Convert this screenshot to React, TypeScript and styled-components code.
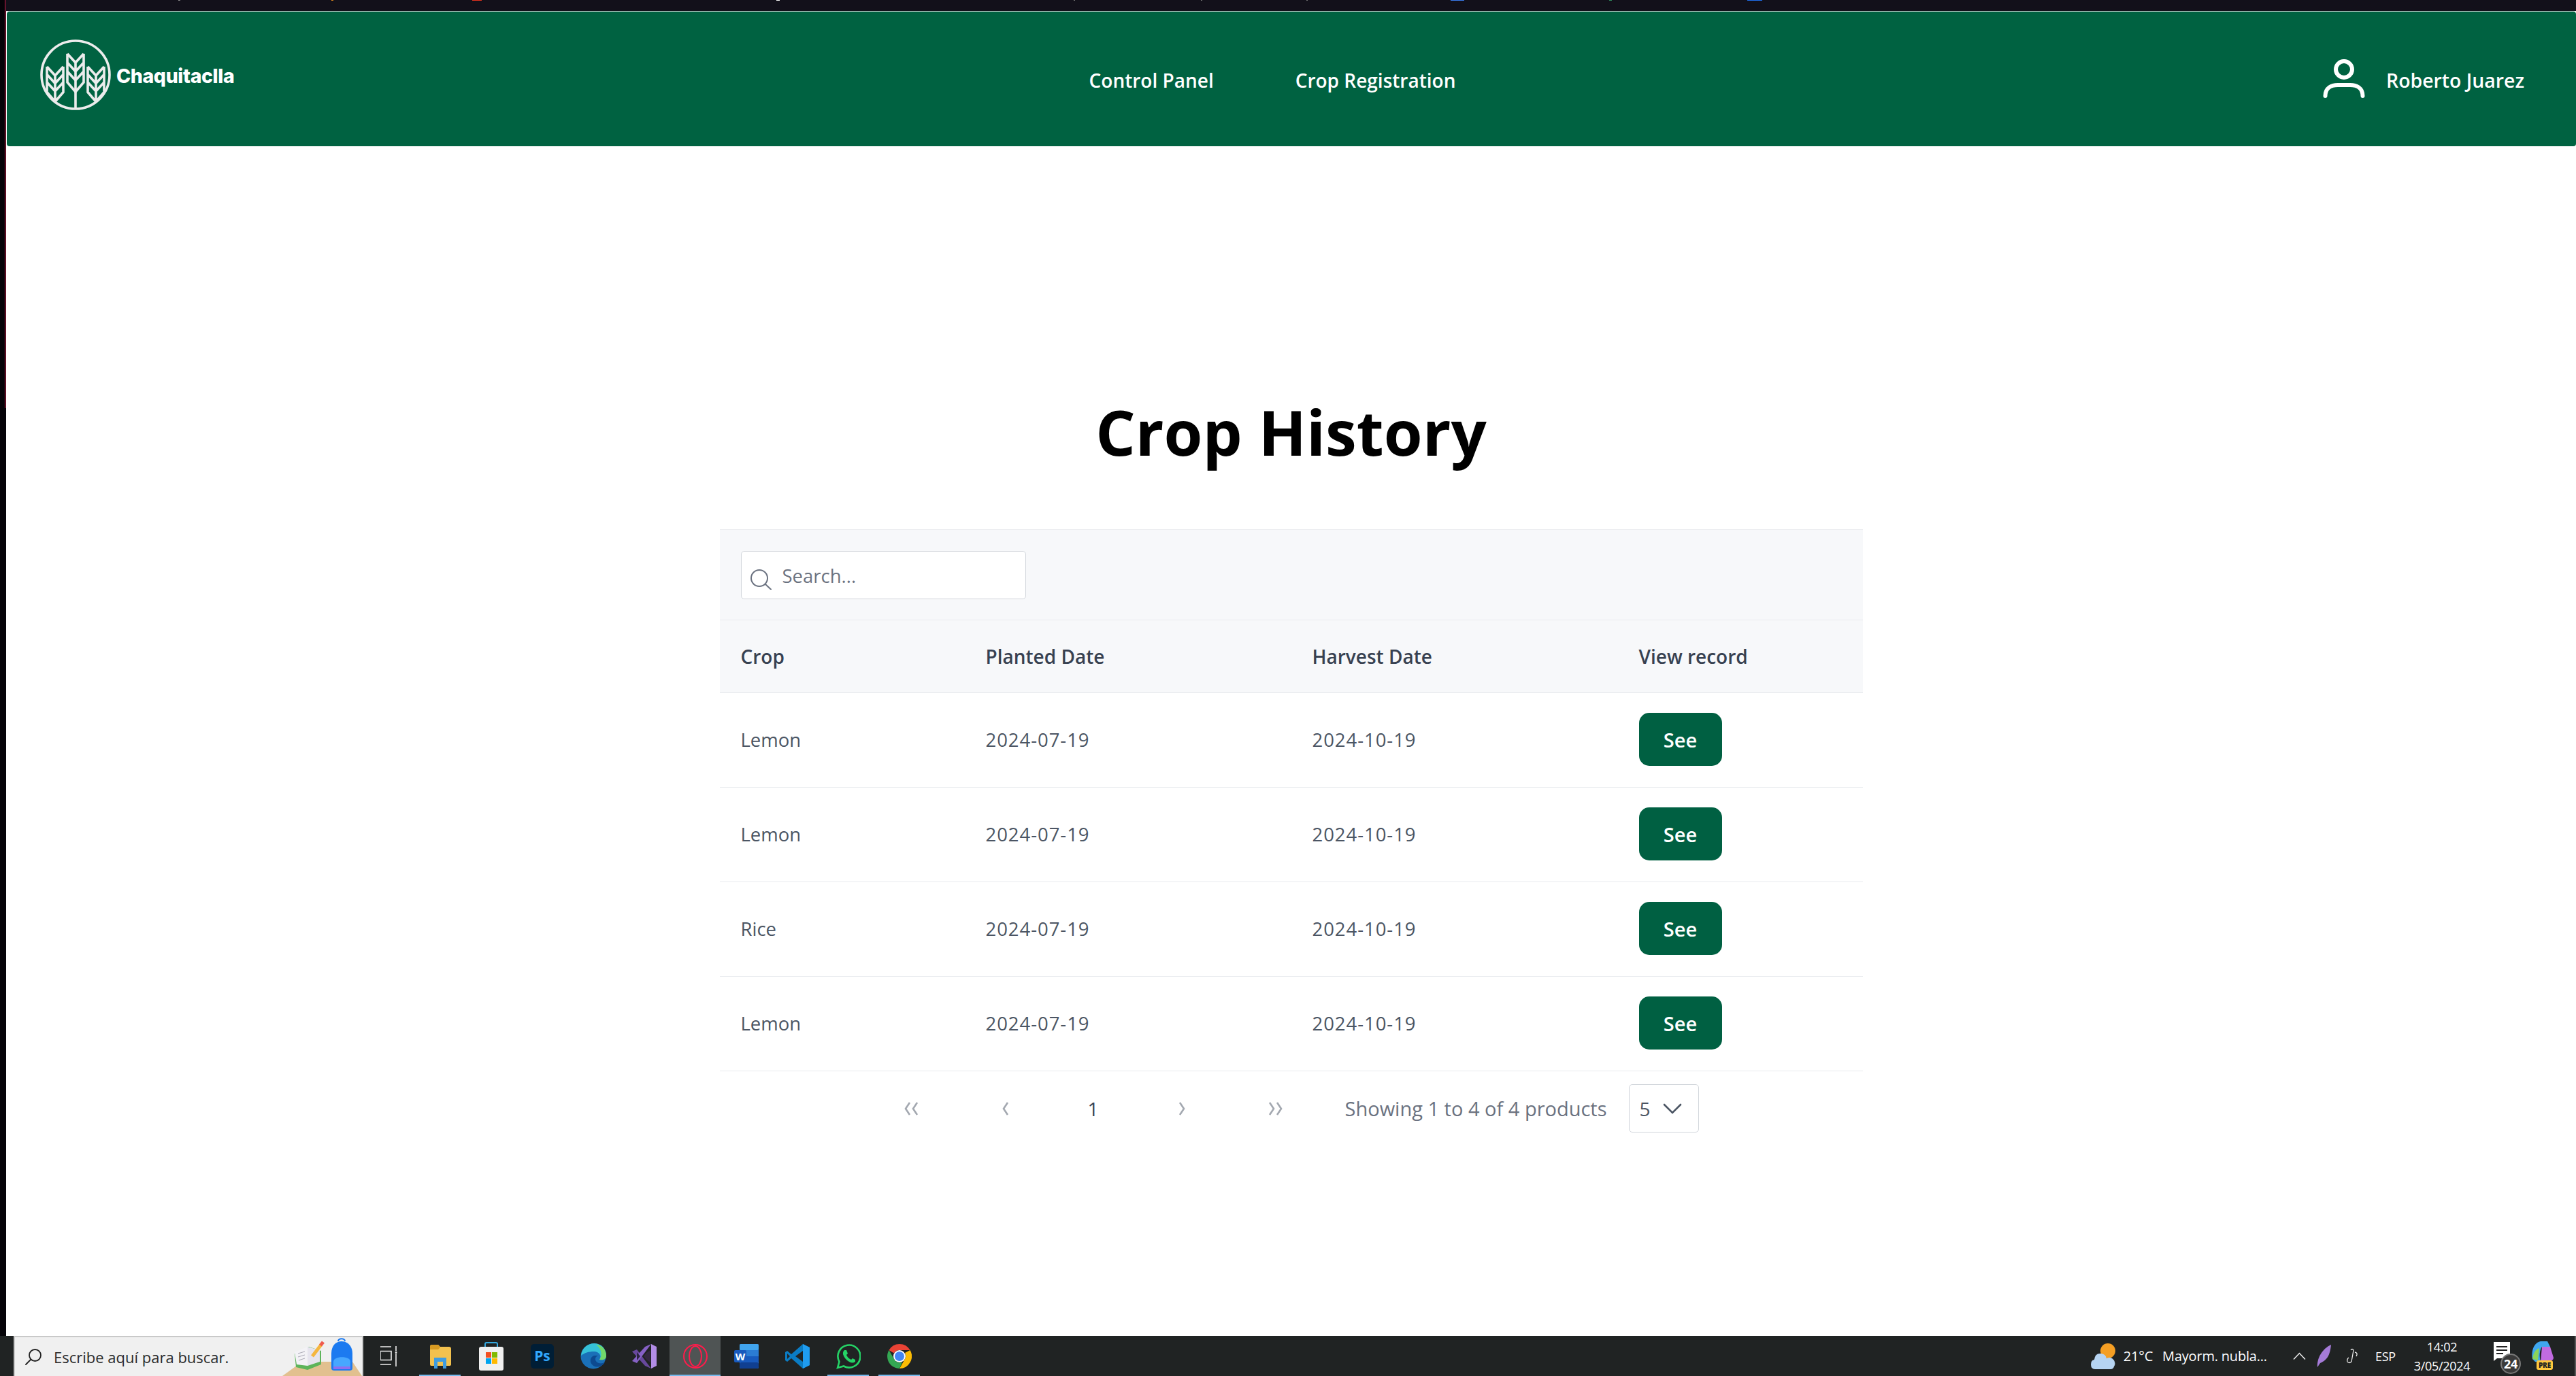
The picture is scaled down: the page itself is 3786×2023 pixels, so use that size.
import React from "react";
import styled, { createGlobalStyle } from "styled-components";

const Global = createGlobalStyle`
  html, body { margin: 0; padding: 0; background: #fff; }
  body { font-family: "Open Sans", "Noto Sans", sans-serif; }
  * { box-sizing: border-box; }
`;

const Screen = styled.div`
  width: 3786px;
  height: 2023px;
  display: flex;
  flex-direction: column;
  overflow: hidden;
`;
const TopStrip = styled.div`
  height: 16px;
  flex: none;
  background: #12101a;
  border-left: 8px solid #050308;
  position: relative;
`;
const Speck = styled.i<{ $x: number; $w: number; $c: string }>`
  position: absolute;
  top: 0;
  left: ${(p) => p.$x - 8}px;
  width: ${(p) => p.$w}px;
  height: 1px;
  background: ${(p) => p.$c};
`;
const Desktop = styled.div`
  flex: 1;
  display: flex;
  min-height: 0;
`;
const EdgeStripe = styled.div`
  width: 9px;
  flex: none;
  background: #050308;
  position: relative;
  &::after {
    content: "";
    position: absolute;
    left: 7px;
    top: -16px;
    height: 600px;
    width: 1px;
    background: #d81b4a;
  }
`;
const Page = styled.div`
  flex: 1;
  min-width: 0;
  background: #fff;
  border-top: 1px solid #e6e6e6;
  display: flex;
  flex-direction: column;
`;
const Navbar = styled.header`
  height: 198px;
  flex: none;
  background: #006241;
  border-radius: 4px;
  margin-left: 1px;
  display: grid;
  grid-template-columns: 1fr auto 1fr;
  align-items: center;
  padding: 0 76px 0 49px;
  color: #fff;
`;
const Brand = styled.div`
  display: flex;
  align-items: center;
  gap: 8px;
  margin-top: -12px;
`;
const BrandName = styled.span`
  font-family: "Inter", "Lato", sans-serif;
  font-weight: 800;
  font-size: 28.5px;
  letter-spacing: -0.4px;
  color: #fff;
  margin-top: 2px;
`;
const NavLinks = styled.nav`
  display: flex;
  gap: 120px;
  margin: 3px 0 0 -29px;
`;
const NavLink = styled.a`
  font-size: 28px;
  font-weight: 600;
  color: #fff;
  line-height: 38px;
`;
const UserBox = styled.div`
  justify-self: end;
  display: flex;
  align-items: center;
  gap: 31px;
`;
const UserName = styled.span`
  font-size: 28.4px;
  font-weight: 600;
  margin-top: 4px;
`;
const Main = styled.main`
  flex: 1;
  display: flex;
  flex-direction: column;
  align-items: center;
  padding-top: 360px;
`;
const Title = styled.h1`
  margin: 0 0 83px;
  font-size: 92px;
  line-height: 120px;
  font-weight: 700;
  color: #000;
`;
const TableCard = styled.section`
  width: 1680px;
`;
const SearchBar = styled.div`
  height: 134px;
  padding: 31px 31px 0;
  background: #f7f8fa;
  border-top: 1px solid #eceef1;
  border-bottom: 1px solid #e9ebee;
`;
const SearchField = styled.label`
  width: 419px;
  height: 71px;
  display: flex;
  align-items: center;
  gap: 16px;
  padding: 2px 0 0 12px;
  background: #fff;
  border: 1px solid #d1d5db;
  border-radius: 5px;
  font-size: 27.5px;
  color: #6b7280;
`;
const LensSvg = styled.svg`
  margin-top: 11px;
`;
const Grid = styled.table`
  width: 1680px;
  border-collapse: collapse;
  table-layout: fixed;
  font-size: 27.5px;
  color: #4b5563;
`;
const HeadRow = styled.tr`
  height: 106px;
  background: #f7f8fa;
  border-bottom: 1px solid #e5e7eb;
`;
const HeadCell = styled.th<{ $w: number }>`
  width: ${(p) => p.$w}px;
  padding: 0 0 0 31px;
  text-align: left;
  font-size: 28px;
  font-weight: 600;
  color: #374151;
`;
const BodyRow = styled.tr`
  height: 139px;
  border-bottom: 1px solid #e9ebee;
`;
const Cell = styled.td`
  padding: 0 0 0 31px;
`;
const DateCell = styled(Cell)`
  letter-spacing: 0.95px;
`;
const SeeButton = styled.button`
  display: block;
  width: 122px;
  height: 78px;
  border: 0;
  border-radius: 15px;
  background: #006042;
  color: #fff;
  font-family: inherit;
  font-size: 29px;
  font-weight: 600;
  padding: 0;
  margin-top: -1px;
`;
const Pager = styled.div`
  height: 110px;
  padding-left: 215px;
  display: flex;
  align-items: center;
  font-size: 29px;
  color: #6b7280;
`;
const PageButton = styled.span<{ $w: number; $active?: boolean }>`
  width: ${(p) => p.$w}px;
  height: 60px;
  flex: none;
  display: flex;
  align-items: center;
  justify-content: center;
  color: ${(p) => (p.$active ? "#374151" : "#9ca3af")};
  font-size: 28px;
`;
const PagerInfo = styled.span`
  margin-left: 35px;
  white-space: nowrap;
  width: 382px;
`;
const PageSize = styled.div`
  margin-left: 35px;
  width: 103px;
  height: 71px;
  border: 1px solid #d1d5db;
  border-radius: 5px;
  display: flex;
  align-items: center;
  padding-left: 15px;
  gap: 18px;
  font-size: 28px;
  color: #4b5563;
`;
const Taskbar = styled.footer`
  height: 59px;
  flex: none;
  background: #202323;
  display: flex;
  align-items: stretch;
  padding-left: 20px;
  color: #fff;
`;
const SearchTray = styled.div`
  width: 514px;
  background: #f0f0f0;
  border: solid #c9c9c9;
  border-width: 2px 2px 0 2px;
  display: flex;
  align-items: center;
  padding-left: 15px;
  gap: 18px;
  color: #2b2b2b;
  font-size: 22px;
  position: relative;
  overflow: hidden;
`;
const TrayLensSvg = styled.svg`
  transform: scaleX(-1);
`;
const TrayArt = styled.svg`
  position: absolute;
  right: 0;
  bottom: 0;
`;
const Tile = styled.div<{ $open?: boolean; $focus?: boolean }>`
  width: 75px;
  flex: none;
  display: flex;
  align-items: center;
  justify-content: center;
  background: ${(p) => (p.$focus ? "#4f5454" : "transparent")};
  position: relative;
  ${(p) =>
    p.$open &&
    `&::after { content: ""; position: absolute; bottom: 0; left: ${p.$focus ? 0 : 7}px; right: ${p.$focus ? 0 : 7}px; height: 2px; background: #76b9ed; }`}
`;
const Tray = styled.div`
  margin-left: auto;
  display: flex;
  align-items: center;
  font-size: 20px;
  letter-spacing: -0.2px;
  padding-right: 30px;
  border-right: 2px solid #5a5a5a;
`;
const Weather = styled.span`
  margin-left: 12px;
  white-space: nowrap;
`;
const WeatherDesc = styled.span`
  margin-left: 14px;
  white-space: nowrap;
`;
const TrayIcon = styled.span<{ $ml: number }>`
  margin-left: ${(p) => p.$ml}px;
  display: flex;
  align-items: center;
`;
const Lang = styled.span`
  margin-left: 24px;
  font-size: 18px;
`;
const Clock = styled.div`
  margin-left: 25px;
  width: 86px;
  display: flex;
  flex-direction: column;
  align-items: center;
  font-size: 18px;
  line-height: 28px;
  white-space: nowrap;
  letter-spacing: -0.3px;
`;
const NotifyBadge = styled.span`
  position: absolute;
  right: -2px;
  bottom: -5px;
  width: 30px;
  height: 30px;
  border-radius: 50%;
  background: #3a3a3a;
  border: 2px solid #777;
  display: flex;
  align-items: center;
  justify-content: center;
  font-size: 18px;
  font-weight: 700;
  color: #fff;
`;
const NotifyBox = styled.div`
  margin-left: 33px;
  width: 38px;
  height: 42px;
  position: relative;
`;

const Stalk = ({ cx, top, w, step }: { cx: number; top: number; w: number; step: number }) => {
  let d = "";
  for (let i = 0; i < 3; i++) {
    const y = top + step * i;
    d += `M${cx - w} ${y} L${cx} ${y + 13} L${cx + w} ${y} `;
  }
  const end = top + step * 3 + 3;
  return (
    <path
      d={`${d} M${cx - w} ${top} V${end} L${cx} ${end + 14} L${cx + w} ${end} V${top} M${cx} ${top + 13} V${end + 14}`}
    />
  );
};

const WheatLogo = () => (
  <svg width="104" height="104" viewBox="0 0 104 104" fill="none" stroke="#ececec" strokeWidth="3.6">
    <circle cx="52" cy="52" r="50" strokeWidth="3.6" />
    <Stalk cx={52} top={21} w={12} step={13} />
    <path d="M52 77 V102" />
    <Stalk cx={22} top={40} w={12} step={11.5} />
    <path d="M22 90 V92" />
    <Stalk cx={82} top={40} w={12} step={11.5} />
    <path d="M82 90 V92" />
  </svg>
);

const UserIcon = () => (
  <svg width="62" height="58" viewBox="0 0 62 58" fill="none" stroke="#fff" strokeWidth="6" strokeLinecap="round">
    <circle cx="31" cy="15" r="12" />
    <path d="M3.5 54 C3.5 42 13 38 22 38 H40 C49 38 58.5 42 58.5 54" />
  </svg>
);

const SearchIcon = () => (
  <LensSvg width="32" height="30" viewBox="0 0 32 30" fill="none" stroke="#6b7280" strokeWidth="2" strokeLinecap="round">
    <circle cx="14" cy="13" r="12" />
    <path d="M23 22 L31 29.5" />
  </LensSvg>
);

const TrayLens = () => (
  <TrayLensSvg width="24" height="24" viewBox="0 0 24 24" fill="none" stroke="#222" strokeWidth="1.8" strokeLinecap="round">
    <circle cx="9.5" cy="9.5" r="8.5" />
    <path d="M16 16 L23 23" />
  </TrayLensSvg>
);

const Chevrons = ({ dir, double }: { dir: "l" | "r"; double?: boolean }) => {
  const p =
    dir === "l"
      ? (x: number) => `M${x + 6} 1 L${x} 10 L${x + 6} 19`
      : (x: number) => `M${x} 1 L${x + 6} 10 L${x} 19`;
  return (
    <svg width={double ? 22 : 10} height="20" viewBox={double ? "0 0 22 20" : "0 0 10 20"} fill="none" stroke="#a3a8b0" strokeWidth="2.6">
      {double ? (
        <>
          <path d={p(2)} />
          <path d={p(13)} />
        </>
      ) : (
        <path d={p(2)} />
      )}
    </svg>
  );
};

const CaretDown = () => (
  <svg width="28" height="16" viewBox="0 0 28 16" fill="none" stroke="#4b5563" strokeWidth="2.6" strokeLinecap="round">
    <path d="M2 2 L14 14 L26 2" />
  </svg>
);

const TrayIllustration = () => (
  <TrayArt width="118" height="57" viewBox="0 0 118 57">
    <path d="M1 57 L30 36 H104 L118 57 Z" fill="#e2c08f" />
    <path d="M19 24 L40 14 L58 20 L58 40 L38 48 L21 44 Z" fill="#5db45a" />
    <path d="M19 22 L38 14 L38 42 L22 40 Z" fill="#f3f2f6" />
    <path d="M38 14 L56 19 L56 36 L38 42 Z" fill="#e6e4ee" />
    <path d="M24 24 L34 21 M24 29 L34 26 M25 34 L34 31" stroke="#a9a8b4" strokeWidth="1" />
    <path d="M45 28 L58 11" stroke="#f4b63f" strokeWidth="5" />
    <path d="M57 12 L61 7" stroke="#ef5b4e" strokeWidth="5" />
    <path d="M73 46 V24 C73 12 80 6 88 6 C96 6 104 12 104 24 V46 C104 48 102 49 100 49 H77 C75 49 73 48 73 46 Z" fill="#1c7af0" />
    <path d="M83 6 C83 1 93 1 93 6" stroke="#1c7af0" strokeWidth="2" fill="none" />
    <path d="M76 46 V36 C76 27 101 27 101 36 V46 Z" fill="#47a7ff" />
    <path d="M76 43 H101 V47 H76 Z" fill="#8f6ff0" />
  </TrayArt>
);

const TaskView = () => (
  <svg width="25" height="30" viewBox="0 0 25 30" fill="none" stroke="#eee" strokeWidth="1.6">
    <path d="M0 1 H16 M0 7.5 H16 V20.5 H0 Z M0 27 H16 M23 0 V7 M23 11 V30" />
    <rect x="21.8" y="8" width="2.6" height="2.6" fill="#eee" stroke="none" />
  </svg>
);
const Explorer = () => (
  <svg width="32" height="36" viewBox="0 0 32 36">
    <path d="M1 4 Q1 1 4 1 H13 L16 4 H29 Q32 4 32 7 V30 Q32 32 29 32 H3 Q1 32 1 30 Z" fill="#f2c14e" />
    <path d="M1 4 Q1 1 4 1 H13 L16 5 L13 8 H1 Z" fill="#d79a22" />
    <path d="M7 20 H25 V36 H20 V26 H12 V36 H7 Z" fill="#3e9ce0" />
  </svg>
);
const Store = () => (
  <svg width="36" height="42" viewBox="0 0 36 42">
    <path d="M9 8 V3 Q9 1 11 1 H25 Q27 1 27 3 V8" fill="none" stroke="#36a9e0" strokeWidth="2" />
    <rect x="0" y="7" width="36" height="35" rx="3" fill="#f0f0f0" />
    <rect x="10" y="15" width="8" height="8" fill="#f25022" />
    <rect x="19" y="15" width="8" height="8" fill="#7fba00" />
    <rect x="10" y="24" width="8" height="8" fill="#00a4ef" />
    <rect x="19" y="24" width="8" height="8" fill="#ffb900" />
  </svg>
);
const PS = () => (
  <svg width="34" height="36" viewBox="0 0 34 36">
    <rect width="34" height="36" rx="5" fill="#001e36" />
    <text x="17" y="25" textAnchor="middle" fontSize="21" fontWeight="700" fill="#31a8ff" fontFamily="Open Sans, sans-serif">Ps</text>
  </svg>
);
const Edge = () => (
  <svg width="38" height="38" viewBox="0 0 38 38">
    <circle cx="19" cy="19" r="18.5" fill="#1a70b8" />
    <path d="M1 18 C2 6 12 0 20 0 C31 0 38 8 38 18 C38 24 33 25 28 24 C32 19 28 12 20 12 C12 12 6 14 1 18 Z" fill="#35c1d8" />
    <path d="M23 2 C31 2 38 9 38 18 C38 24 33 25 28 24 C32 19 32 8 23 2 Z" fill="#72d86a" />
    <path d="M20 18 C14 20 13 28 18 32 C24 37 32 34 36 28 C30 31 22 29 22 23 C22 21 23 19 26 18 Z" fill="#0d4a90" />
  </svg>
);
const VS = () => (
  <svg width="36" height="36" viewBox="0 0 36 36">
    <path d="M0 11 L7 8 L28 36 L19 32 Z" fill="#68489c" />
    <path d="M0 25 L7 28 L28 0 L19 4 Z" fill="#8661c5" />
    <path d="M28 0 L36 4 V32 L28 36 Z" fill="#b28de6" />
    <path d="M7 12 L12 18 L7 24 Z" fill="#2c2440" />
    <path d="M21 13 L27 9 V27 L21 23 L17 18 Z" fill="#33283f" />
  </svg>
);
const Opera = () => (
  <svg width="36" height="36" viewBox="0 0 36 36" fill="none" stroke="#ff1b4b" strokeWidth="2">
    <circle cx="18" cy="18" r="17" />
    <ellipse cx="18" cy="18" rx="9" ry="15" />
  </svg>
);
const Word = () => (
  <svg width="36" height="36" viewBox="0 0 36 36">
    <rect x="8" y="0" width="28" height="36" rx="2" fill="#2b7cd3" />
    <rect x="8" y="0" width="28" height="9" rx="2" fill="#41a5ee" />
    <rect x="8" y="18" width="28" height="9" fill="#185abd" />
    <rect x="8" y="27" width="28" height="9" rx="2" fill="#103f91" />
    <rect x="0" y="9" width="18" height="18" rx="2" fill="#185abd" />
    <text x="9" y="24" textAnchor="middle" fontSize="15" fontWeight="700" fill="#fff" fontFamily="Open Sans, sans-serif">W</text>
  </svg>
);
const VSCode = () => (
  <svg width="36" height="36" viewBox="0 0 36 36">
    <path d="M26 0 L36 5 V31 L26 36 L9 21 L3 26 L0 24 V12 L3 10 L9 15 Z" fill="#0a7cc4" />
    <path d="M26 0 L36 5 V31 L26 36 Z" fill="#1f9cf0" />
    <path d="M26 10 L15 18 L26 26 Z" fill="#202323" />
    <path d="M3 14 L7 18 L3 22 Z" fill="#202323" />
  </svg>
);
const WhatsApp = () => (
  <svg width="36" height="38" viewBox="0 0 36 38" fill="none">
    <path d="M2 36 L4.5 27 A16.5 16.5 0 1 1 11 33.5 Z" stroke="#25d366" strokeWidth="2.6" />
    <path d="M12 10 L15 10 L17 15 L15 17 Q17 22 22 24 L24 22 L28 24 L28 27 Q24 30 19 27 Q12 23 10 16 Q9.5 12 12 10 Z" fill="#25d366" />
  </svg>
);
const Chrome = () => (
  <svg width="36" height="36" viewBox="0 0 36 36">
    <path d="M18 0 A18 18 0 0 1 33.6 9 H18 A9 9 0 0 0 10 13.5 L2.5 9 A18 18 0 0 1 18 0 Z" fill="#ea4335" />
    <path d="M33.6 9 A18 18 0 0 1 18 36 L26 22 A9 9 0 0 0 26 13 Z" fill="#fbbc04" />
    <path d="M18 36 A18 18 0 0 1 2.5 9 L10 22 A9 9 0 0 0 22 26.5 Z" fill="#34a853" />
    <circle cx="18" cy="18" r="9" fill="#fff" />
    <circle cx="18" cy="18" r="7" fill="#4285f4" />
  </svg>
);
const Cloud = () => (
  <svg width="36" height="42" viewBox="0 0 36 42">
    <circle cx="25" cy="13" r="11" fill="#f59f24" />
    <path d="M6 40 Q0 40 0 33 Q0 27 5 26 Q6 16 15 17 Q22 18 23 24 Q30 21 34 27 Q37 32 34 36 Q33 40 29 40 Z" fill="#b6d4f2" />
  </svg>
);
const Up = () => (
  <svg width="19" height="11" viewBox="0 0 19 11" fill="none" stroke="#eee" strokeWidth="1.5">
    <path d="M1 10.5 L9.5 1.5 L18 10.5" />
  </svg>
);
const Feather = () => (
  <svg width="21" height="34" viewBox="0 0 21 34">
    <path d="M1 33 C0 20 8 6 21 0 C20 10 18 22 5 27 Z" fill="#a57bd8" />
  </svg>
);
const Pen = () => (
  <svg width="20" height="24" viewBox="0 0 20 24" fill="none" stroke="#eee" strokeWidth="1.3">
    <path d="M8 3 Q10 0 12 3 L9 20 Q5 23 3 20 Q2 16 5 14 M14 6 Q19 7 16 12" />
  </svg>
);
const Copilot = () => (
  <svg width="34" height="44" viewBox="0 0 34 44">
    <path d="M2 26 C0 14 4 2 14 0 H24 L28 8 H16 C12 14 12 22 14 30 L6 30 Z" fill="#3fa7f0" />
    <path d="M16 8 H28 L33 24 C33 28 28 30 22 30 H14 Z" fill="#c16be0" />
    <path d="M2 26 C3 18 6 12 12 10 L10 28 Z" fill="#8bd35a" />
    <rect x="8" y="28" width="24" height="14" rx="3" fill="#ffc83d" />
    <text x="20" y="39" textAnchor="middle" fontSize="10" fontWeight="800" fill="#222" fontFamily="Open Sans, sans-serif">PRE</text>
  </svg>
);

const rows = ["Lemon", "Lemon", "Rice", "Lemon"];
const specks = [
  { x: 262, w: 3, c: "#8a8a8a" },
  { x: 487, w: 3, c: "#e08a1e" },
  { x: 694, w: 14, c: "#e8321e" },
  { x: 1141, w: 5, c: "#ffffff" },
  { x: 1578, w: 2, c: "#777777" },
  { x: 1765, w: 2, c: "#777777" },
  { x: 1920, w: 2, c: "#777777" },
  { x: 2132, w: 20, c: "#3b7cf0" },
  { x: 2365, w: 4, c: "#2f8f5f" },
  { x: 2568, w: 22, c: "#1f6ff0" },
];

export default function App() {
  return (
    <Screen>
      <Global />
      <TopStrip>
        {specks.map((s) => (
          <Speck key={s.x} $x={s.x} $w={s.w} $c={s.c} />
        ))}
      </TopStrip>
      <Desktop>
        <EdgeStripe />
        <Page>
          <Navbar>
            <Brand>
              <WheatLogo />
              <BrandName>Chaquitaclla</BrandName>
            </Brand>
            <NavLinks>
              <NavLink>Control Panel</NavLink>
              <NavLink>Crop Registration</NavLink>
            </NavLinks>
            <UserBox>
              <UserIcon />
              <UserName>Roberto Juarez</UserName>
            </UserBox>
          </Navbar>
          <Main>
            <Title>Crop History</Title>
            <TableCard>
              <SearchBar>
                <SearchField>
                  <SearchIcon />
                  Search...
                </SearchField>
              </SearchBar>
              <Grid>
                <thead>
                  <HeadRow>
                    <HeadCell $w={360}>Crop</HeadCell>
                    <HeadCell $w={480}>Planted Date</HeadCell>
                    <HeadCell $w={480}>Harvest Date</HeadCell>
                    <HeadCell $w={360}>View record</HeadCell>
                  </HeadRow>
                </thead>
                <tbody>
                  {rows.map((r, i) => (
                    <BodyRow key={i}>
                      <Cell>{r}</Cell>
                      <DateCell>2024-07-19</DateCell>
                      <DateCell>2024-10-19</DateCell>
                      <Cell>
                        <SeeButton>See</SeeButton>
                      </Cell>
                    </BodyRow>
                  ))}
                </tbody>
              </Grid>
              <Pager>
                <PageButton $w={134}><Chevrons dir="l" double /></PageButton>
                <PageButton $w={142}><Chevrons dir="l" /></PageButton>
                <PageButton $w={116} $active>1</PageButton>
                <PageButton $w={144}><Chevrons dir="r" /></PageButton>
                <PageButton $w={133}><Chevrons dir="r" double /></PageButton>
                <PagerInfo>Showing 1 to 4 of 4 products</PagerInfo>
                <PageSize>
                  5
                  <CaretDown />
                </PageSize>
              </Pager>
            </TableCard>
          </Main>
        </Page>
      </Desktop>
      <Taskbar>
        <SearchTray>
          <TrayLens />
          Escribe aquí para buscar.
          <TrayIllustration />
        </SearchTray>
        <Tile><TaskView /></Tile>
        <Tile $open><Explorer /></Tile>
        <Tile><Store /></Tile>
        <Tile><PS /></Tile>
        <Tile><Edge /></Tile>
        <Tile><VS /></Tile>
        <Tile $open $focus><Opera /></Tile>
        <Tile><Word /></Tile>
        <Tile><VSCode /></Tile>
        <Tile $open><WhatsApp /></Tile>
        <Tile $open><Chrome /></Tile>
        <Tray>
          <Cloud />
          <Weather>21°C</Weather>
          <WeatherDesc>Mayorm. nubla...</WeatherDesc>
          <TrayIcon $ml={38}><Up /></TrayIcon>
          <TrayIcon $ml={16}><Feather /></TrayIcon>
          <TrayIcon $ml={21}><Pen /></TrayIcon>
          <Lang>ESP</Lang>
          <Clock>
            <span>14:02</span>
            <span>3/05/2024</span>
          </Clock>
          <NotifyBox>
            <svg width="24" height="28" viewBox="0 0 24 28">
              <path d="M0 0 H24 V24 H5 L0 28 Z" fill="#fff" />
              <path d="M4 7 H20 M4 12 H20 M4 17 H14" stroke="#222" strokeWidth="2" />
            </svg>
            <NotifyBadge>24</NotifyBadge>
          </NotifyBox>
          <TrayIcon $ml={17}><Copilot /></TrayIcon>
        </Tray>
      </Taskbar>
    </Screen>
  );
}
